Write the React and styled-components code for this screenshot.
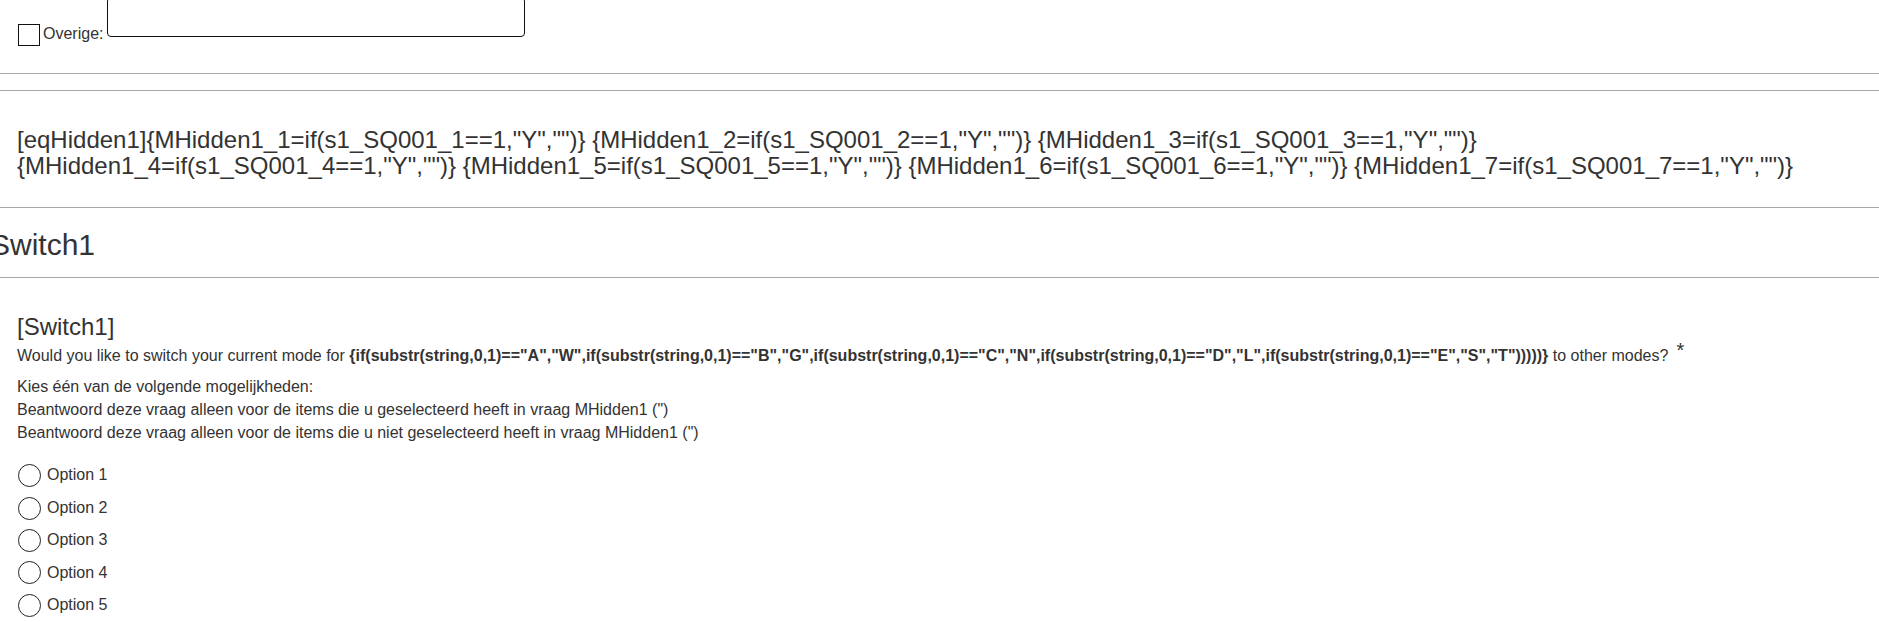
import React from 'react';
import styled, { createGlobalStyle } from 'styled-components';

const GlobalStyle = createGlobalStyle`
	html,
	body {
		margin: 0;
		padding: 0;
		background: #fff;
	}

	body {
		font-family: 'Liberation Sans', Arial, Helvetica, sans-serif;
		font-size: 16px;
		line-height: 1.42857;
		color: #333;
	}
`;

// page is scrolled a few pixels, the top of the input is cut off
const Page = styled.div`
	margin-top: -3px;
	overflow: hidden;
`;

const OtherQuestion = styled.section`
	padding: 0 17px 27px;
	border-bottom: 1px solid #aaa;
`;

const OtherRow = styled.div`
	display: flex;
	align-items: flex-end;
`;

const CheckBox = styled.span`
	flex: none;
	box-sizing: border-box;
	width: 22px;
	height: 22px;
	margin: 0 3px 0 1px;
	border: 1px solid #111;
	background: #fff;
`;

const Label = styled.label`
	margin-right: 4px;
`;

const TextInput = styled.input`
	box-sizing: border-box;
	width: 418px;
	height: 40px;
	margin: 0 0 9px;
	border: 1px solid #111;
	border-radius: 4px;
	background: #fff;
	outline: none;
`;

const EquationQuestion = styled.section`
	margin-top: 16px;
	padding: 36px 17px 27px;
	border-top: 1px solid #aaa;
	border-bottom: 1px solid #aaa;
	font-size: 24px;
	line-height: 1.1;
`;

const GroupHeader = styled.div`
	padding: 20px 0 16px;
	border-bottom: 1px solid #aaa;
`;

const GroupTitle = styled.h2`
	margin: 0 0 0 -10px;
	font-size: 30px;
	font-weight: normal;
	line-height: 33px;
`;

const Question = styled.section`
	padding: 36px 17px 0;
`;

const QuestionTitle = styled.h3`
	margin: 0 0 5px;
	font-size: 24px;
	font-weight: normal;
	line-height: 1.1;
`;

const QuestionText = styled.div`
	line-height: 22.86px;

	strong {
		font-weight: bold;
	}
`;

const Asterisk = styled.span`
	margin-left: 8px;
	font-size: 20px;
	line-height: 0;
	vertical-align: 4px;
`;

const Help = styled.div`
	margin-top: 8px;
	line-height: 22.86px;
`;

const OptionList = styled.ul`
	margin: 15px 0 0;
	padding: 0;
	list-style: none;
`;

const OptionRow = styled.li`
	display: flex;
	align-items: center;
	height: 32.4px;
`;

const Radio = styled.span`
	flex: none;
	box-sizing: border-box;
	width: 23px;
	height: 23px;
	margin: 0 6px 0 1px;
	border: 1.5px solid #222;
	border-radius: 50%;
`;

const equation = [
	'[eqHidden1]{MHidden1_1=if(s1_SQ001_1==1,"Y","")}',
	'{MHidden1_2=if(s1_SQ001_2==1,"Y","")}',
	'{MHidden1_3=if(s1_SQ001_3==1,"Y","")}',
	'{MHidden1_4=if(s1_SQ001_4==1,"Y","")}',
	'{MHidden1_5=if(s1_SQ001_5==1,"Y","")}',
	'{MHidden1_6=if(s1_SQ001_6==1,"Y","")}',
	'{MHidden1_7=if(s1_SQ001_7==1,"Y","")}'
].join(' ');

const expression =
	'{if(substr(string,0,1)=="A","W",if(substr(string,0,1)=="B","G",if(substr(string,0,1)=="C","N",if(substr(string,0,1)=="D","L",if(substr(string,0,1)=="E","S","T")))))}';

const options = ['Option 1', 'Option 2', 'Option 3', 'Option 4', 'Option 5'];

function App() {
	return (
		<Page>
			<GlobalStyle />
			<OtherQuestion>
				<OtherRow>
					<CheckBox />
					<Label>Overige:</Label>
					<TextInput type="text" />
				</OtherRow>
			</OtherQuestion>

			<EquationQuestion>{equation}</EquationQuestion>

			<GroupHeader>
				<GroupTitle>Switch1</GroupTitle>
			</GroupHeader>

			<Question>
				<QuestionTitle>[Switch1]</QuestionTitle>
				<QuestionText>
					Would you like to switch your current mode for <strong>{expression}</strong> to other modes?
					<Asterisk>*</Asterisk>
				</QuestionText>
				<Help>
					<div>Kies één van de volgende mogelijkheden:</div>
					<div>Beantwoord deze vraag alleen voor de items die u geselecteerd heeft in vraag MHidden1 (")</div>
					<div>Beantwoord deze vraag alleen voor de items die u niet geselecteerd heeft in vraag MHidden1 (")</div>
				</Help>
				<OptionList>
					{options.map((o) => (
						<OptionRow key={o}>
							<Radio />
							{o}
						</OptionRow>
					))}
				</OptionList>
			</Question>
		</Page>
	);
}

export default App;
